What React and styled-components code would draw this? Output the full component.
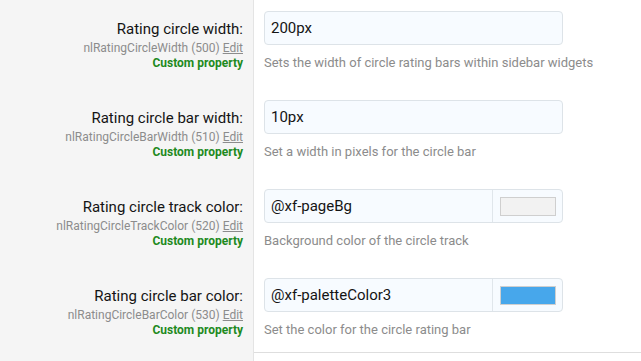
import React from 'react'
import styled, { createGlobalStyle } from 'styled-components'

const GlobalStyle = createGlobalStyle`
  html, body {
    margin: 0;
    padding: 0;
    background: #fff;
    overflow: hidden;
  }
  body {
    font-family: 'Segoe UI', Roboto, 'Noto Sans', sans-serif;
    color: #141414;
  }
`

const properties = [
  {
    title: 'Rating circle width:',
    name: 'nlRatingCircleWidth',
    order: 500,
    value: '200px',
    hint: 'Sets the width of circle rating bars within sidebar widgets',
  },
  {
    title: 'Rating circle bar width:',
    name: 'nlRatingCircleBarWidth',
    order: 510,
    value: '10px',
    hint: 'Set a width in pixels for the circle bar',
  },
  {
    title: 'Rating circle track color:',
    name: 'nlRatingCircleTrackColor',
    order: 520,
    value: '@xf-pageBg',
    swatch: '#f2f2f2',
    hint: 'Background color of the circle track',
  },
  {
    title: 'Rating circle bar color:',
    name: 'nlRatingCircleBarColor',
    order: 530,
    value: '@xf-paletteColor3',
    swatch: '#47a7eb',
    hint: 'Set the color for the circle rating bar',
  },
]

function App() {
  return (
    <>
      <GlobalStyle />
      <FormList>
        {properties.map((p, i) => (
          <Row key={p.name}>
            <Term>
              <Title>{p.title}</Title>
              <Meta>
                {p.name} ({p.order}) <EditLink href="#">Edit</EditLink>
              </Meta>
              <Custom>Custom property</Custom>
            </Term>
            <Desc last={i === properties.length - 1}>
              {p.swatch ? (
                <ColorGroup>
                  <ColorText value={p.value} readOnly />
                  <SwatchBox>
                    <Swatch style={{ background: p.swatch }} />
                  </SwatchBox>
                </ColorGroup>
              ) : (
                <TextInput value={p.value} readOnly />
              )}
              <Hint>{p.hint}</Hint>
            </Desc>
          </Row>
        ))}
        <Row>
          <Term />
          <Desc />
        </Row>
      </FormList>
    </>
  )
}

const FormList = styled.div`
  display: flex;
  flex-direction: column;
  width: 641px;
  height: 361px;
  overflow: hidden;
`

const Row = styled.div`
  display: flex;
  flex-shrink: 0;
`

const Term = styled.div`
  width: 254px;
  flex-shrink: 0;
  box-sizing: border-box;
  padding: 19px 10px 0 0;
  background: #f5f5f5;
  border-right: 1px solid #e4e4e4;
  text-align: right;
`

const Title = styled.div`
  font-size: 15px;
  line-height: 20px;
  color: #141414;
`

const Meta = styled.div`
  margin-top: 1px;
  font-size: 12px;
  line-height: 16px;
  color: #8c8c8c;
`

const EditLink = styled.a`
  color: #8c8c8c;
  text-decoration: underline;
`

const Custom = styled.div`
  font-size: 12px;
  line-height: 15px;
  font-weight: bold;
  color: #1e8a1e;
`

const Desc = styled.div`
  flex: 1;
  box-sizing: border-box;
  padding: 11px 10px 18px 10px;
  height: ${p => (p.last ? '86px' : 'auto')};
  border-bottom: ${p => (p.last ? '1px solid #dedede' : 'none')};
`

const inputBox = `
  box-sizing: border-box;
  height: 34px;
  border: 1px solid #dde3e8;
  border-radius: 4px;
  background: #f7fbff;
`

const TextInput = styled.input`
  ${inputBox}
  display: block;
  width: 299px;
  padding: 0 6px;
  font-family: inherit;
  font-size: 15px;
  color: #141414;
  outline: none;
`

const ColorGroup = styled.div`
  ${inputBox}
  display: flex;
  width: 299px;
  overflow: hidden;
`

const ColorText = styled.input`
  flex: 1;
  min-width: 0;
  border: none;
  background: transparent;
  padding: 0 6px;
  font-family: inherit;
  font-size: 15px;
  color: #141414;
  outline: none;
`

const SwatchBox = styled.div`
  width: 69px;
  display: flex;
  align-items: center;
  justify-content: center;
  border-left: 1px solid #e0e6eb;
`

const Swatch = styled.div`
  box-sizing: border-box;
  width: 56px;
  height: 19px;
  border: 1px solid #cfcfcf;
`

const Hint = styled.div`
  margin-top: 9px;
  font-size: 13px;
  line-height: 17px;
  color: #8c8c8c;
`

export default App
